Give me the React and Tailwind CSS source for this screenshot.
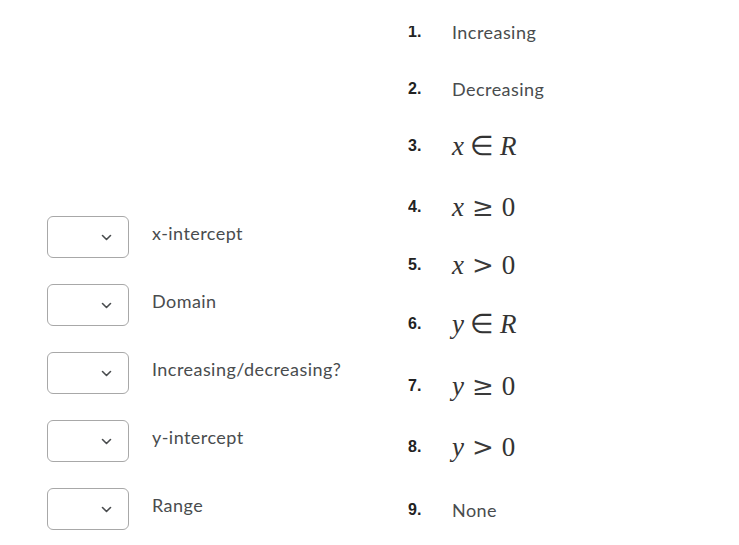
import React from "react";

const left = ["x-intercept", "Domain", "Increasing/decreasing?", "y-intercept", "Range"];

function Chevron() {
  return (
    <svg width="11" height="7" viewBox="0 0 11 7" className="text-[#494c4e]">
      <path d="M1.5 1.5l4 4 4-4" fill="none" stroke="currentColor" strokeWidth="1.6" strokeLinecap="round" strokeLinejoin="round" />
    </svg>
  );
}

function Select() {
  return (
    <div className="w-[82px] h-[42px] shrink-0 rounded-[6px] border border-[#a8a8a8] bg-white flex items-center justify-end pr-[16px]">
      <Chevron />
    </div>
  );
}

const Mi = ({ children }) => <span className="italic">{children}</span>;
const Mo = ({ children }) => (
  <span className="font-['DejaVu_Serif',serif] font-light text-[26px] mx-[8px] text-[#3a3a3a]">{children}</span>
);
const In = () => <span className="mx-[6px]">∈</span>;

const right = [
  { h: 56, t: "Increasing" },
  { h: 58, t: "Decreasing" },
  { h: 56, m: <><Mi>x</Mi><In /><Mi>R</Mi></> },
  { h: 66, m: <><Mi>x</Mi><Mo>≥</Mo>0</> },
  { h: 50, m: <><Mi>x</Mi><Mo>&gt;</Mo>0</> },
  { h: 68, m: <><Mi>y</Mi><In /><Mi>R</Mi></> },
  { h: 56, m: <><Mi>y</Mi><Mo>≥</Mo>0</> },
  { h: 66, m: <><Mi>y</Mi><Mo>&gt;</Mo>0</> },
  { h: 60, t: "None" },
];

export default function App() {
  return (
    <div className="w-[739px] h-[545px] bg-white overflow-hidden flex font-['Lato',sans-serif]">
      {/* answer boxes */}
      <div className="w-[408px] shrink-0 pl-[47px] pt-[216px] flex flex-col gap-[26px]">
        {left.map((l) => (
          <div key={l} className="flex items-start gap-[23px]">
            <Select />
            <span className="pt-[7px] text-[18px] tracking-[0.45px] leading-[20px] text-[#494c4e]">{l}</span>
          </div>
        ))}
      </div>

      {/* choices */}
      <div className="mt-[26px] overflow-hidden flex-1">
        <div className="-mt-[22px]">
          {right.map((r, i) => (
            <div key={i} className="flex items-center" style={{ height: r.h }}>
              <span className="w-[44px] font-['Liberation_Sans',sans-serif] font-bold text-[16px] text-[#222]">
                {i + 1}.
              </span>
              {r.t ? (
                <span className="text-[18px] tracking-[0.45px] text-[#494c4e]">{r.t}</span>
              ) : (
                <span className="font-['Liberation_Serif',serif] text-[27px] leading-none text-[#333] flex items-baseline">
                  {r.m}
                </span>
              )}
            </div>
          ))}
        </div>
      </div>
    </div>
  );
}
